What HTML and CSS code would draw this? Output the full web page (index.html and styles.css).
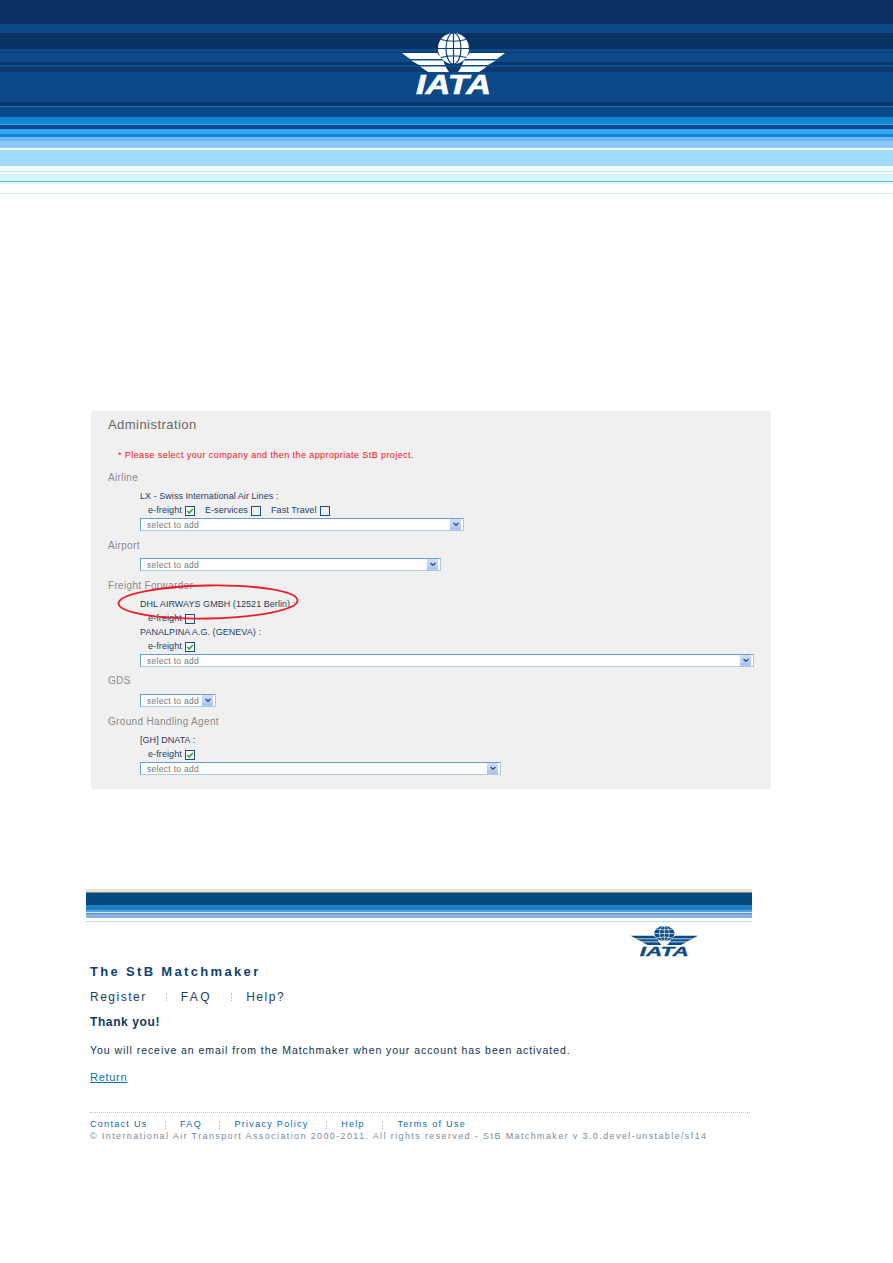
FILE: index.html
```html
<!DOCTYPE html>
<html lang="en">
<head>
<meta charset="utf-8">
<title>IATA StB Matchmaker</title>
<link rel="stylesheet" href="styles.css">
</head>
<body>
<svg class="defs" width="0" height="0" aria-hidden="true">
  <symbol id="chevron" viewBox="0 0 8 5">
    <path d="M1.500 1L4 3.300L6.500 1" fill="none" stroke="#3d5283" stroke-width="1.500"/>
  </symbol>
  <symbol id="tick" viewBox="0 0 10 10">
    <path d="M1.500 5L4 7.500L8.500 2.500" fill="none" stroke="#2ea52e" stroke-width="2"/>
  </symbol>
</svg>

<header class="banner">
  <svg class="logo logo-main" viewBox="0 0 104 68" preserveAspectRatio="none">
    <circle cx="52.500" cy="15.500" r="15.500" class="logo-fill"/>
    <g class="logo-grid">
      <ellipse cx="52.500" cy="15.500" rx="7.500" ry="15.500"/>
      <path d="M52.500 0V31M37 15.500H68M40 6.500Q52.500 10 65 6.500M40 24.500Q52.500 21 65 24.500"/>
    </g>
    <g class="logo-fill">
      <path d="M1 20H36Q39 23 41 26H9Z"/>
      <path d="M10 27.500H42Q43 29.500 44 32H18Z"/>
      <path d="M19 33.500H44.500Q46 36 48 39H27Z"/>
      <path d="M104 20H69Q66 23 64 26H96Z"/>
      <path d="M95 27.500H63Q62 29.500 61 32H87Z"/>
      <path d="M86 33.500H60.500Q59 36 57 39H78Z"/>
    </g>
    <text class="logo-text" x="15" y="61" textLength="75" lengthAdjust="spacingAndGlyphs">IATA</text>
  </svg>
</header>

<main class="panel">
  <h1 class="panel-title">Administration</h1>
  <p class="notice">* Please select your company and then the appropriate StB project.</p>

  <h2 class="group-label group-label-first">Airline</h2>
  <div class="indent">
    <div class="company">LX - Swiss International Air Lines :</div>
    <div class="options">
      <span class="option">e-freight<span class="box"><svg class="tick"><use href="#tick"/></svg></span></span>
      <span class="option">E-services<span class="box box-plain"></span></span>
      <span class="option">Fast Travel<span class="box box-plain"></span></span>
    </div>
    <div class="select select-airline"><span class="select-text">select to add</span><span class="select-btn"><svg class="chevron"><use href="#chevron"/></svg></span></div>
  </div>

  <h2 class="group-label">Airport</h2>
  <div class="indent">
    <div class="select select-first select-airport"><span class="select-text">select to add</span><span class="select-btn"><svg class="chevron"><use href="#chevron"/></svg></span></div>
  </div>

  <h2 class="group-label">Freight Forwarder</h2>
  <div class="indent">
    <div class="company">DHL AIRWAYS GMBH (12521 Berlin) :</div>
    <div class="options">
      <span class="option">e-freight<span class="box box-plain"></span></span>
    </div>
    <div class="company">PANALPINA A.G. (GENEVA) :</div>
    <div class="options">
      <span class="option">e-freight<span class="box"><svg class="tick"><use href="#tick"/></svg></span></span>
    </div>
    <div class="select select-forwarder"><span class="select-text">select to add</span><span class="select-btn"><svg class="chevron"><use href="#chevron"/></svg></span></div>
  </div>

  <h2 class="group-label group-label-tight">GDS</h2>
  <div class="indent">
    <div class="select select-first select-gds"><span class="select-text">select to add</span><span class="select-btn"><svg class="chevron"><use href="#chevron"/></svg></span></div>
  </div>

  <h2 class="group-label">Ground Handling Agent</h2>
  <div class="indent">
    <div class="company">[GH] DNATA :</div>
    <div class="options">
      <span class="option">e-freight<span class="box"><svg class="tick"><use href="#tick"/></svg></span></span>
    </div>
    <div class="select select-agent"><span class="select-text">select to add</span><span class="select-btn"><svg class="chevron"><use href="#chevron"/></svg></span></div>
  </div>

  <svg class="highlight" viewBox="0 0 184 38"><ellipse cx="92" cy="19" rx="89.500" ry="16.500" transform="rotate(-1 92 19)" fill="none" stroke="#ee1c25" stroke-width="1.800"/></svg>
</main>

<section class="shot">
  <div class="shot-band"></div>
  <div class="shot-logo-row">
    <svg class="logo logo-small" viewBox="0 0 104 68" preserveAspectRatio="none">
      <circle cx="52.500" cy="15.500" r="15.500" class="logo-fill"/>
      <g class="logo-grid">
        <ellipse cx="52.500" cy="15.500" rx="7.500" ry="15.500"/>
        <path d="M52.500 0V31M37 15.500H68M40 6.500Q52.500 10 65 6.500M40 24.500Q52.500 21 65 24.500"/>
      </g>
      <g class="logo-fill">
        <path d="M1 20H36Q39 23 41 26H9Z"/>
        <path d="M10 27.500H42Q43 29.500 44 32H18Z"/>
        <path d="M19 33.500H44.500Q46 36 48 39H27Z"/>
        <path d="M104 20H69Q66 23 64 26H96Z"/>
        <path d="M95 27.500H63Q62 29.500 61 32H87Z"/>
        <path d="M86 33.500H60.500Q59 36 57 39H78Z"/>
      </g>
      <text class="logo-text" x="15" y="61" textLength="75" lengthAdjust="spacingAndGlyphs">IATA</text>
    </svg>
  </div>
  <div class="shot-body">
    <h2 class="shot-title">The StB Matchmaker</h2>
    <nav class="shot-nav">
      <a>Register</a><span class="sep"></span><a class="nav-faq">FAQ</a><span class="sep"></span><a>Help?</a>
    </nav>
    <h3 class="thanks">Thank you!</h3>
    <p class="message">You will receive an email from the Matchmaker when your account has been activated.</p>
    <a class="return">Return</a>
    <footer class="shot-footer">
      <div class="footer-links">
        <a>Contact Us</a><span class="sep"></span><a>FAQ</a><span class="sep"></span><a>Privacy Policy</a><span class="sep"></span><a>Help</a><span class="sep"></span><a>Terms of Use</a>
      </div>
      <p class="copyright">© International Air Transport Association 2000-2011. All rights reserved - StB Matchmaker v 3.0.devel-unstable/sf14</p>
    </footer>
  </div>
</section>
</body>
</html>
```

FILE: styles.css
```css
* { box-sizing: border-box; }
html, body { margin: 0; padding: 0; background: #fff; }
body { font-family: "Liberation Sans", Arial, sans-serif; height: 1263px; overflow: hidden; }
h1, h2, h3, p { margin: 0; font-weight: normal; }
.defs { position: absolute; }

.logo-fill { fill: currentColor; }
.logo-grid { fill: none; stroke: var(--grid); stroke-width: 1.2; }
.logo-text {
  font-family: "Liberation Sans", Arial, sans-serif;
  font-weight: bold;
  font-style: italic;
  font-size: 28px;
  fill: currentColor;
  stroke: currentColor;
  stroke-width: 0.6;
}

.banner {
  height: 194px;
  display: flex;
  justify-content: center;
  align-items: flex-start;
  padding: 33px 0 0 12px;
  background: linear-gradient(to bottom,
    #0b3263 0 24px, #0b4a88 24px 33px, #0a3263 33px 49px, #0d4a8a 49px 52px, #0a3a70 52px 53px,
    #0c4a88 53px 62px, #08376b 62px 65px, #0c4a88 65px 67px, #0a3a70 67px 72px, #0b4a88 72px 102px,
    #063566 102px 106px, #1a70c0 106px 107px, #0b4a88 107px 117px, #1585d8 117px 124px, #3aa0e8 124px 125px,
    #0c4a88 125px 129px, #33a6f0 129px 134px, #1585d8 134px 137px, #6ab8f5 137px 141px, #8cc8fb 141px 148px,
    #fff 148px 150px, #9fdcff 150px 166px, #fff 166px 168px, #f0fafe 168px 171px, #b8e4fa 171px 172px,
    #fff 172px 174px, #d0f8f8 174px 181px, #80b0c0 181px 182px, #d0fafa 182px 184px, #fff 184px 193px,
    #d0f2f5 193px 194px);
}
.logo-main { width: 104px; height: 68px; color: #fff; --grid: #0b4080; }

.panel {
  position: relative;
  width: 680px;
  height: 378px;
  margin: 217px 0 0 91px;
  padding: 4px 0 14px;
  background: #f0f0f0;
  font-size: 9px;
  letter-spacing: 0.05px;
  color: #1f3d63;
}
.panel-title { font-size: 13px; line-height: 20px; margin-left: 17px; color: #666; letter-spacing: 0.45px; }
.notice { line-height: 14px; margin: 13px 0 0 27px; color: #f01020; font-size: 9px; letter-spacing: 0.42px; }
.group-label { font-size: 10px; line-height: 14px; margin: 8px 0 0 17px; color: #8a8a8a; letter-spacing: 0.33px; }
.group-label + .indent { margin-top: 4px; }
.group-label-first { margin-top: 9px; }
.group-label-tight { margin-top: 7px; }
.indent { margin-left: 49px; }
.company, .options { line-height: 14px; height: 14px; white-space: nowrap; }
.options { display: flex; padding-left: 8px; letter-spacing: 0.1px; }
.option { display: inline-flex; align-items: center; margin-right: 10px; }
.box { display: inline-block; width: 10px; height: 10px; margin: 1px 0 0 3px; border: 1px solid #1f4e79; background: #fff; }
.box-plain { background: #f0f0f0; }
.tick { display: block; width: 8px; height: 8px; }
.select {
  display: flex;
  align-items: center;
  justify-content: space-between;
  height: 13px;
  margin-top: 1px;
  padding: 0 1px 0 6px;
  background: #fff;
  border: 1px solid #a8cce6;
  border-top-color: #6a9fd5;
  border-left-color: #6a9fd5;
  color: #777;
  font-size: 8.500px;
  letter-spacing: 0.3px;
}
.select-first { margin-top: 5px; }
.select-airline { width: 324px; }
.select-airport { width: 301px; }
.select-forwarder { width: 614px; }
.select-gds { width: 76px; margin-top: 6px; }
.select-agent { width: 361px; }
.select-btn { display: flex; align-items: center; justify-content: center; width: 11px; height: 11px; margin-right: 1px; background: linear-gradient(to bottom, #d3dff8, #aac2ef); }
.chevron { width: 8px; height: 5px; }
.highlight { position: absolute; left: 25px; top: 172px; width: 184px; height: 38px; }

.shot { width: 666px; margin: 100px 0 0 86px; }
.shot-band {
  height: 33px;
  background: linear-gradient(to bottom,
    #e8e2d0 0 3px, #7a8a90 3px 4px, #054880 4px 16px, #1a80c8 16px 21px, #5aa0d8 21px 23px,
    #cfe4f5 23px 24px, #5a90d0 24px 25px, #8ab0e0 25px 29px, #fff 29px 32px, #c0d8f0 32px 33px);
}
.shot-logo-row { display: flex; justify-content: flex-end; padding: 4px 54px 0 0; }
.logo-small { display: block; width: 68px; height: 33px; color: #0a4a85; --grid: #fff; }
.shot-body { padding-left: 4px; color: #103a66; }
.shot-title { font-size: 13px; font-weight: bold; line-height: 16px; margin-top: 5px; letter-spacing: 2.33px; color: #0e4174; white-space: nowrap; }
.shot-nav { display: flex; align-items: center; margin-top: 10px; font-size: 12px; line-height: 14px; letter-spacing: 1.5px; color: #20405f; }
.shot-nav .sep { margin: 0 14px 0 19px; }
.nav-faq { letter-spacing: 2.5px; }
.sep { width: 1px; height: 8px; border-left: 1px dotted #aab8c6; }
.thanks { font-size: 12px; font-weight: bold; line-height: 14px; margin-top: 11px; letter-spacing: 0.6px; color: #0e3a66; }
.message { font-size: 10.500px; line-height: 14px; margin-top: 14px; letter-spacing: 0.95px; color: #103050; white-space: nowrap; }
.return { display: block; width: max-content; font-size: 11px; line-height: 14px; margin-top: 13px; letter-spacing: 0.7px; color: #0a70a8; text-decoration: underline; }
.shot-footer { width: 660px; margin-top: 28px; padding-top: 5px; border-top: 1px dotted #b8c6d2; }
.footer-links { display: flex; align-items: center; font-size: 9px; line-height: 13px; letter-spacing: 1.3px; color: #0a6aa8; }
.footer-links .sep { margin: 0 14.500px 0 17px; }
.copyright { font-size: 9px; line-height: 10px; letter-spacing: 1.38px; color: #7a8a98; white-space: nowrap; }
```
